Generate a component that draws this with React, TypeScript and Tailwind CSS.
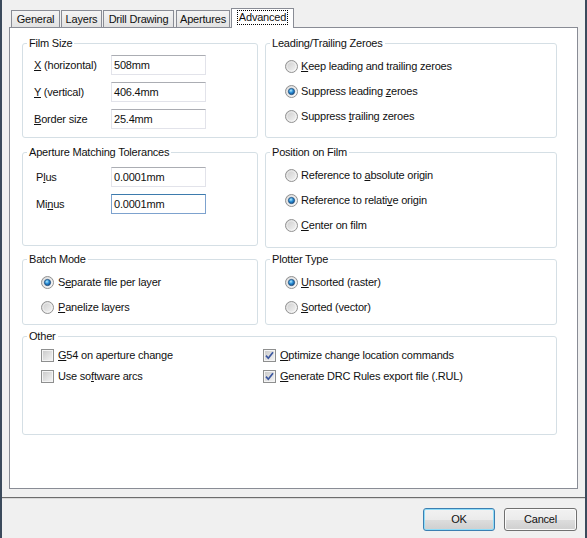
import React, { useId } from "react";

const Radio: React.FC<{ checked?: boolean }> = ({ checked }) => {
    const id = useId();
    return (
        <svg width="13" height="13" viewBox="0 0 13 13" className="shrink-0">
            <defs>
                <linearGradient id={id + "bg"} x1="0" y1="0" x2="1" y2="1">
                    <stop offset="0" stopColor="#c9c9c9" />
                    <stop offset="1" stopColor="#f8f8f8" />
                </linearGradient>
                <radialGradient id={id + "dot"} cx="0.4" cy="0.35" r="0.75">
                    <stop offset="0" stopColor="#b4ecff" />
                    <stop offset="0.45" stopColor="#2b8fd8" />
                    <stop offset="1" stopColor="#0c3f78" />
                </radialGradient>
            </defs>
            <circle cx="6.5" cy="6.5" r="6" fill={`url(#${id}bg)`} stroke="#929292" />
            <circle cx="6.5" cy="6.5" r="4.6" fill="none" stroke="#ffffff" strokeOpacity="0.5" />
            {checked && <circle cx="6.5" cy="6.5" r="3.1" fill={`url(#${id}dot)`} stroke="#1d4c7c" strokeWidth="0.8" />}
        </svg>
    );
};

const Check: React.FC<{ checked?: boolean }> = ({ checked }) => {
    const id = useId();
    return (
        <svg width="13" height="13" viewBox="0 0 13 13" className="shrink-0">
            <defs>
                <linearGradient id={id} x1="0" y1="0" x2="1" y2="1">
                    <stop offset="0" stopColor="#cbcbcb" />
                    <stop offset="1" stopColor="#f2f2f2" />
                </linearGradient>
            </defs>
            <rect x="0.5" y="0.5" width="12" height="12" fill="#f4f4f4" stroke="#8e8f8f" />
            <rect x="2" y="2" width="9" height="9" fill={`url(#${id})`} />
            {checked && <path d="M3 6.6 L5.3 9.2 L10 3.2" fill="none" stroke="#3b57a0" strokeWidth="1.7" />}
        </svg>
    );
};

const Group: React.FC<{ title: string; className?: string; children?: React.ReactNode }> = ({ title, className, children }) => (
    <fieldset className={`border border-[#d5dfe5] rounded-[3px] ${className ?? ""}`}>
        <legend className="ml-[4px] px-[2px] leading-[13px]">{title}</legend>
        {children}
    </fieldset>
);

const Field: React.FC<{ label: React.ReactNode; value: string; labelW: string; focused?: boolean }> = ({ label, value, labelW, focused }) => (
    <div className="flex items-center h-[20px]">
        <div className={labelW}>{label}</div>
        <div
            className={`w-[95px] h-[20px] flex items-center pl-[2px] bg-white border ${
                focused ? "border-[#7da2ce] border-t-[#3d7bad]" : "border-[#e2e3ea] border-t-[#abadb3]"
            }`}
        >
            {value}
        </div>
    </div>
);

const Option: React.FC<{ checked?: boolean; gap?: string; children: React.ReactNode }> = ({ checked, gap = "gap-[3px]", children }) => (
    <div className={`flex items-center h-[25px] ${gap}`}>
        <Radio checked={checked} />
        <span>{children}</span>
    </div>
);

const Box: React.FC<{ checked?: boolean; children: React.ReactNode }> = ({ checked, children }) => (
    <div className="flex items-center h-[21px] gap-[4px]">
        <Check checked={checked} />
        <span>{children}</span>
    </div>
);

const tabBase = "h-[17px] flex items-center justify-center border border-b-0 border-[#898c95] bg-[linear-gradient(#f4f4f4,#e2e2e2)]";

export default function App() {
    return (
        <div className="w-[587px] h-[538px] bg-[#f0f0f0] border-x-2 border-[#3b4a5c] flex flex-col font-['Liberation_Sans',Arial,sans-serif] text-[11px] leading-[13px] tracking-[-0.2px] text-[#111]">
            <div className="pl-[7px]">
                {/* Tabs */}
                <div className="relative z-10 flex items-end h-[19px] mt-[8px] pl-[2px]">
                    <div className={`${tabBase} w-[49px]`}>General</div>
                    <div className={`${tabBase} w-[41px] ml-[1px]`}>Layers</div>
                    <div className={`${tabBase} w-[71px] ml-[1px]`}>Drill Drawing</div>
                    <div className={`${tabBase} w-[54px] ml-[2px]`}>Apertures</div>
                    <div className="w-[63px] h-[20px] -mb-px ml-[1px] flex items-start justify-center pt-[2px] bg-white border border-b-0 border-[#898c95]">
                        <span className="outline outline-1 outline-dotted outline-black px-[1px]">Advanced</span>
                    </div>
                </div>

                {/* Panel */}
                <div className="w-[569px] h-[462px] border border-[#898c95] bg-white pt-[9px] pl-[12px]">
                    <div className="flex gap-[7px] items-start">
                        <Group title="Film Size" className="w-[236px] h-[101px]">
                            <div className="flex flex-col gap-[7px] pt-[5px] pl-[11px]">
                                <Field labelW="w-[77px]" label={<><u>X</u> (horizontal)</>} value="508mm" />
                                <Field labelW="w-[77px]" label={<><u>Y</u> (vertical)</>} value="406.4mm" />
                                <Field labelW="w-[77px]" label={<><u>B</u>order size</>} value="25.4mm" />
                            </div>
                        </Group>
                        <Group title="Leading/Trailing Zeroes" className="w-[292px] h-[101px]">
                            <div className="flex flex-col pt-[4px] pl-[19px]">
                                <Option><u>K</u>eep leading and trailing zeroes</Option>
                                <Option checked>Suppress leading <u>z</u>eroes</Option>
                                <Option>Suppress <u>t</u>railing zeroes</Option>
                            </div>
                        </Group>
                    </div>

                    <div className="flex gap-[7px] items-start mt-[8px]">
                        <Group title="Aperture Matching Tolerances" className="w-[236px] h-[100px]">
                            <div className="flex flex-col gap-[7px] pt-[8px] pl-[13px]">
                                <Field labelW="w-[75px]" label={<>P<u>l</u>us</>} value="0.0001mm" />
                                <Field labelW="w-[75px]" label={<>Mi<u>n</u>us</>} value="0.0001mm" focused />
                            </div>
                        </Group>
                        <Group title="Position on Film" className="w-[292px] h-[102px]">
                            <div className="flex flex-col pt-[4px] pl-[19px]">
                                <Option>Reference to <u>a</u>bsolute origin</Option>
                                <Option checked>Reference to relati<u>v</u>e origin</Option>
                                <Option><u>C</u>enter on film</Option>
                            </div>
                        </Group>
                    </div>

                    <div className="flex gap-[7px] items-start mt-[5px]">
                        <Group title="Batch Mode" className="w-[236px] h-[72px]">
                            <div className="flex flex-col pt-[4px] pl-[18px]">
                                <Option checked gap="gap-[4px]">S<u>e</u>parate file per layer</Option>
                                <Option gap="gap-[4px]"><u>P</u>anelize layers</Option>
                            </div>
                        </Group>
                        <Group title="Plotter Type" className="w-[292px] h-[72px]">
                            <div className="flex flex-col pt-[4px] pl-[19px]">
                                <Option checked><u>U</u>nsorted (raster)</Option>
                                <Option><u>S</u>orted (vector)</Option>
                            </div>
                        </Group>
                    </div>

                    <Group title="Other" className="w-[535px] h-[105px] mt-[5px]">
                        <div className="grid grid-cols-[222px_1fr] pt-[2px] pl-[18px]">
                            <Box><u>G</u>54 on aperture change</Box>
                            <Box checked><u>O</u>ptimize change location commands</Box>
                            <Box>Use so<u>f</u>tware arcs</Box>
                            <Box checked><u>G</u>enerate DRC Rules export file (.RUL)</Box>
                        </div>
                    </Group>
                </div>
            </div>

            {/* Separator */}
            <div className="mt-[8px] h-px bg-[#6c6c6c]" />
            <div className="h-px bg-[#d9d9d9]" />

            {/* Buttons */}
            <div className="flex justify-end gap-[9px] pt-[9px] pr-[8px]">
                <button className="w-[72px] h-[23px] rounded-[3px] border border-[#3c7fb1] shadow-[inset_0_0_0_1px_#8fdcf8] bg-[linear-gradient(#f2f2f2_0%,#ebebeb_50%,#dddddd_51%,#cfcfcf_100%)]">
                    OK
                </button>
                <button className="w-[73px] h-[23px] rounded-[3px] border border-[#707070] shadow-[inset_0_0_0_1px_#fbfbfb] bg-[linear-gradient(#f2f2f2_0%,#ebebeb_50%,#dddddd_51%,#cfcfcf_100%)]">
                    Cancel
                </button>
            </div>
        </div>
    );
}
